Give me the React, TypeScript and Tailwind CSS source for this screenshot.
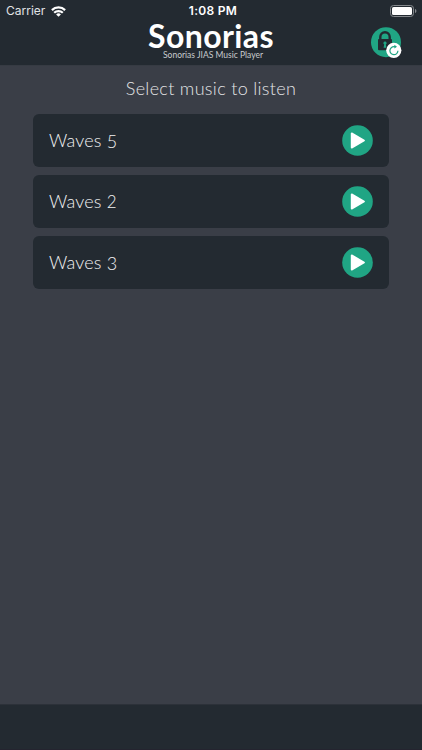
const tracks = [
  { id: 5, name: 'Waves', digitClass: 'relative top-px' },
  { id: 2, name: 'Waves', digitClass: 'text-[17px]' },
  { id: 3, name: 'Waves', digitClass: 'relative top-px' },
];

function WifiIcon() {
  return (
    <svg className="h-[11px] w-[15px]" viewBox="0 0 15 11" fill="none" stroke="#fff" strokeWidth="2.2">
      <path d="M.9 4.1a9.4 9.4 0 0 1 13.2 0" />
      <path d="M3.2 6.8a6.1 6.1 0 0 1 8.6 0" />
      <path d="M7.5 10.8 5.1 8.4a3.4 3.4 0 0 1 4.8 0z" fill="#fff" stroke="none" />
    </svg>
  );
}

function BatteryIcon() {
  return (
    <svg className="h-[12px] w-[27px]" viewBox="0 0 27 12">
      <rect x=".5" y=".5" width="23" height="11" rx="3" fill="none" stroke="#85898d" />
      <rect x="2" y="2" width="20" height="8" rx="1.6" fill="#fff" />
      <path d="M25 4v4c.9-.3 1.4-1.1 1.4-2S25.9 4.3 25 4z" fill="#85898d" />
    </svg>
  );
}

function RestoreIcon() {
  return (
    <svg className="h-[31px] w-[32px]" viewBox="0 0 32 31">
      <circle cx="15" cy="15.2" r="15" fill="#20a584" />
      <path d="M9.3 12.5V10a4.7 4.7 0 0 1 9.4 0v2.5" fill="none" stroke="#232a31" strokeWidth="2.4" />
      <rect x="7" y="12" width="14" height="11.2" rx="1" fill="#232a31" />
      <path d="M14 14.600a1.600 1.600 0 0 1 .8 3l.6 3.200h-2.800l.6-3.200a1.600 1.600 0 0 1 .8-3z" fill="#20a584" />
      <circle cx="22.8" cy="23.3" r="7.6" fill="#fff" />
      <path d="M24.4 19.7h-1.2a4 4 0 1 0 3.7 4" fill="none" stroke="#20a584" strokeWidth="1.2" />
      <path d="M23.4 17.8 26 19.7l-2.600 1.900z" fill="#20a584" />
    </svg>
  );
}

function PlayIcon() {
  return (
    <svg className="h-[31px] w-[31px]" viewBox="0 0 31 31">
      <circle cx="15.5" cy="15.5" r="15.3" fill="#20a584" />
      <path d="M9.7 8.4v14.2L22 15.5z" fill="#fff" stroke="#fff" strokeWidth="1.8" strokeLinejoin="round" />
    </svg>
  );
}

function Header() {
  return (
    <header className="relative h-[66px] shrink-0 border-b border-[#363b43] bg-[#232a31]">
      <div className="grid h-[22px] grid-cols-[1fr_auto_1fr] items-center pr-[5px] pl-[6px] font-['Inter',sans-serif] text-[12px] text-white">
        <div className="flex items-center gap-[6px]">
          <span className="text-[#e1e3e5]">Carrier</span>
          <WifiIcon />
        </div>
        <span className="pl-[3px] font-semibold tracking-[0.3px]">1:08 PM</span>
        <div className="flex justify-end">
          <BatteryIcon />
        </div>
      </div>
      <div className="flex flex-col items-center">
        <h1 className="h-[28px] text-[32px] leading-[28px] font-bold tracking-[0.4px]">Sonorias</h1>
        <p className="pl-[4px] text-[8.5px] leading-[11px] text-[#c9cccf]">Sonorias JIAS Music Player</p>
      </div>
      <button className="absolute top-[27px] right-[19px]" aria-label="Restore purchases">
        <RestoreIcon />
      </button>
    </header>
  );
}

export default function App() {
  return (
    <div className="flex h-[750px] w-[422px] flex-col overflow-hidden bg-[#3a3e47] font-['Lato',sans-serif] text-white">
      <Header />
      <main className="flex-1 px-[33px]">
        <h2 className="h-[48px] text-center text-[18px] leading-[44px] font-light tracking-[0.32px] text-[#e3e4e6]">
          Select music to listen
        </h2>
        <ul className="flex flex-col gap-[8px]">
          {tracks.map((track) => (
            <li
              key={track.id}
              className="flex h-[53px] items-center justify-between rounded-[6px] bg-[#232a31] px-[16px]"
            >
              <span className="text-[18px] font-light tracking-[0.15px] text-[#f0f1f2]">
                {track.name} <span className={track.digitClass}>{track.id}</span>
              </span>
              <button aria-label="Play">
                <PlayIcon />
              </button>
            </li>
          ))}
        </ul>
      </main>
      <footer className="h-[46px] shrink-0 border-t border-b border-t-[#2c3139] border-b-[#24242f] bg-[#232a31]" />
    </div>
  );
}
